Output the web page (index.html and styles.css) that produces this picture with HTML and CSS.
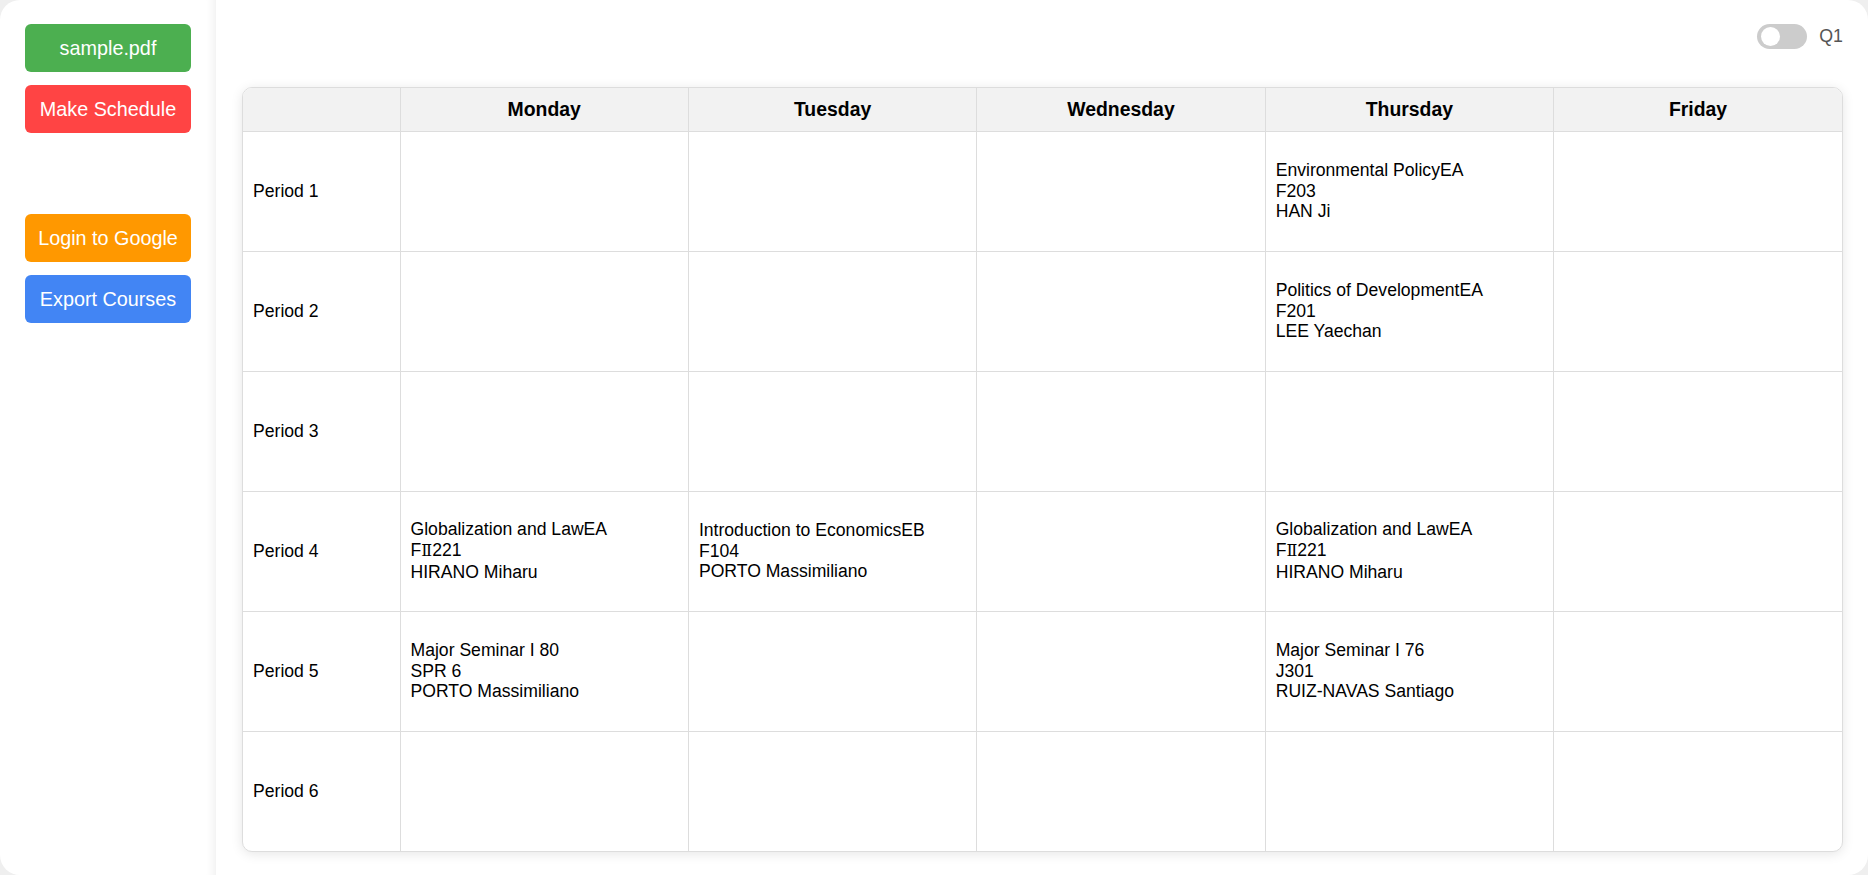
FILE: index.html
```html
<!DOCTYPE html>
<html lang="en">
<head>
<meta charset="utf-8">
<title>Schedule</title>
<link rel="stylesheet" href="styles.css">
</head>
<body>
<div class="app">
  <aside class="sidebar">
    <button class="btn btn-green">sample.pdf</button>
    <button class="btn btn-red">Make Schedule</button>
    <div class="spacer"></div>
    <button class="btn btn-orange">Login to Google</button>
    <button class="btn btn-blue">Export Courses</button>
  </aside>
  <main class="main">
    <div class="topbar">
      <span class="toggle"><span class="knob"></span></span>
      <span class="q-label">Q1</span>
    </div>
    <div class="table-card">
      <table class="schedule">
        <colgroup>
          <col class="col-period">
          <col><col><col><col><col>
        </colgroup>
        <thead>
          <tr>
            <th></th>
            <th>Monday</th>
            <th>Tuesday</th>
            <th>Wednesday</th>
            <th>Thursday</th>
            <th>Friday</th>
          </tr>
        </thead>
        <tbody>
          <tr>
            <td>Period 1</td>
            <td></td><td></td><td></td>
            <td>Environmental PolicyEA<br>F203<br>HAN Ji</td>
            <td></td>
          </tr>
          <tr>
            <td>Period 2</td>
            <td></td><td></td><td></td>
            <td>Politics of DevelopmentEA<br>F201<br>LEE Yaechan</td>
            <td></td>
          </tr>
          <tr>
            <td>Period 3</td>
            <td></td><td></td><td></td><td></td><td></td>
          </tr>
          <tr>
            <td>Period 4</td>
            <td>Globalization and LawEA<br>F<span class="roman">Ⅱ</span>221<br>HIRANO Miharu</td>
            <td>Introduction to EconomicsEB<br>F104<br>PORTO Massimiliano</td>
            <td></td>
            <td>Globalization and LawEA<br>F<span class="roman">Ⅱ</span>221<br>HIRANO Miharu</td>
            <td></td>
          </tr>
          <tr>
            <td>Period 5</td>
            <td>Major Seminar I 80<br>SPR 6<br>PORTO Massimiliano</td>
            <td></td><td></td>
            <td>Major Seminar I 76<br>J301<br>RUIZ-NAVAS Santiago</td>
            <td></td>
          </tr>
          <tr>
            <td>Period 6</td>
            <td></td><td></td><td></td><td></td><td></td>
          </tr>
        </tbody>
      </table>
    </div>
  </main>
</div>
</body>
</html>
```
FILE: styles.css
```css
html, body {
  margin: 0;
  padding: 0;
}
body {
  background: #efefef;
  font-family: "Liberation Sans", Arial, sans-serif;
  color: #000;
}
.app {
  display: flex;
  height: 875px;
  background: #fff;
  border-radius: 20px;
  overflow: hidden;
}
.sidebar {
  width: 216px;
  flex: none;
  box-sizing: border-box;
  padding: 24px 25px 0 25px;
  display: flex;
  flex-direction: column;
  box-shadow: inset -11px 0 10px -9px rgba(0, 0, 0, 0.07);
}
.btn {
  display: block;
  width: 166px;
  height: 48px;
  border: none;
  border-radius: 6px;
  color: #fff;
  font-family: "Liberation Sans", Arial, sans-serif;
  font-size: 19.8px;
  padding: 0;
  margin: 0 0 13px 0;
  cursor: pointer;
}
.btn-green { background: #4caf50; }
.btn-red { background: #ff4444; }
.btn-orange { background: #ff9800; }
.btn-blue { background: #4285f4; }
.spacer {
  height: 68px;
}
.main {
  flex: 1;
  box-sizing: border-box;
  padding: 24px 25px 23px 26px;
  display: flex;
  flex-direction: column;
}
.topbar {
  display: flex;
  justify-content: flex-end;
  align-items: center;
  height: 25px;
  margin-bottom: 38px;
}
.toggle {
  position: relative;
  width: 50px;
  height: 25px;
  background: #cccccc;
  border-radius: 13px;
}
.knob {
  position: absolute;
  left: 4px;
  top: 3px;
  width: 19px;
  height: 19px;
  background: #fff;
  border-radius: 50%;
}
.q-label {
  margin-left: 12px;
  font-size: 17.8px;
  color: #555;
}
.table-card {
  border-radius: 10px;
  overflow: hidden;
  box-shadow: 0 2px 12px rgba(0, 0, 0, 0.1);
  background: #fff;
  border: 1px solid #dddddd;
}
.schedule {
  width: 100%;
  border-collapse: collapse;
  table-layout: fixed;
  font-size: 17.6px;
  line-height: 20.8px;
}
.col-period {
  width: 157px;
}
.schedule th,
.schedule td {
  border: 1px solid #dddddd;
  padding: 0 10px;
  vertical-align: middle;
}
.schedule thead tr {
  height: 43px;
}
.schedule th {
  background: #f2f2f2;
  font-size: 19.4px;
  font-weight: bold;
  text-align: center;
}
.schedule tbody tr {
  height: 120px;
}
.schedule td {
  text-align: left;
}
.roman {
  font-family: "DejaVu Serif", serif;
  font-size: 16px;
}
.schedule tr > :first-child {
  border-left: none;
}
.schedule tr > :last-child {
  border-right: none;
}
.schedule thead tr th {
  border-top: none;
}
.schedule tbody tr:last-child td {
  border-bottom: none;
}
```
